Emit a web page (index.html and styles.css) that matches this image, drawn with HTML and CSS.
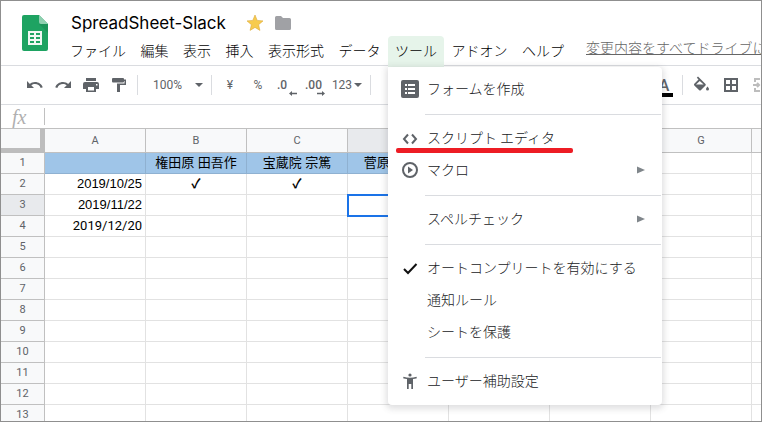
FILE: index.html
```html
<!DOCTYPE html>
<html lang="ja">
<head>
    <meta charset="UTF-8">
    <meta name="viewport" content="width=device-width, initial-scale=1.0">
    <title>SpreadSheet-Slack</title>
    <link rel="stylesheet" href="styles.css">
</head>
<body>
    <div class="app">
        <header class="header">
            <svg class="logo" viewBox="0 0 26 36">
                <path d="M2 0h15l9 9v25a2 2 0 0 1-2 2H2a2 2 0 0 1-2-2V2a2 2 0 0 1 2-2z" fill="#1ea362"/>
                <path d="M17 9h9v9z" fill="#17864f" opacity=".5"/>
                <path d="M17 0l9 9h-7a2 2 0 0 1-2-2z" fill="#8fd0b0"/>
                <path d="M6 16h14v14H6zM8 18v2h4v-2zm6 0v2h4v-2zm-6 4v2h4v-2zm6 0v2h4v-2zm-6 4v2h4v-2zm6 0v2h4v-2z" fill="#f1f8f4" fill-rule="evenodd"/>
            </svg>
            <div class="header-main">
                <div class="title-row">
                    <input class="doc-title" type="text" value="SpreadSheet-Slack" aria-label="名前を変更">
                    <button class="title-btn" aria-label="スター">
                        <svg width="18" height="18" viewBox="0 0 18 18"><path d="M9 1l2.200 5.400 5.800.5-4.400 3.800 1.300 5.700L9 13.400l-4.900 3 1.300-5.700L1 6.900l5.800-.5z" fill="#f7cb4d" stroke="#dba93a" stroke-width=".6"/></svg>
                    </button>
                    <button class="title-btn" aria-label="移動">
                        <svg width="18" height="18" viewBox="0 0 18 18"><path d="M1 3.500A1.500 1.500 0 0 1 2.500 2H7l2 2h6.500A1.500 1.500 0 0 1 17 5.500v9a1.500 1.500 0 0 1-1.500 1.500h-13A1.500 1.500 0 0 1 1 14.500z" fill="#a0a1a5"/></svg>
                    </button>
                </div>
                <div class="menu-row">
                    <nav class="menubar">
                        <button class="menu-btn">ファイル</button>
                        <button class="menu-btn">編集</button>
                        <button class="menu-btn">表示</button>
                        <button class="menu-btn">挿入</button>
                        <button class="menu-btn">表示形式</button>
                        <button class="menu-btn">データ</button>
                        <div class="menu-open">
                            <button class="menu-btn active" aria-expanded="true">ツール</button>
                            <div class="dropdown" role="menu">
                                <button class="item" role="menuitem">
                                    <svg class="item-icon" viewBox="0 0 18 18"><rect width="18" height="18" rx="2" fill="#5f6368"/><path d="M4 4h2v2H4zM7 4h7v2H7zM4 8h2v2H4zM7 8h7v2H7zM4 12h2v2H4zM7 12h7v2H7z" fill="#fff"/></svg>
                                    <span class="item-label">フォームを作成</span>
                                </button>
                                <hr>
                                <button class="item marked" role="menuitem">
                                    <svg class="item-icon" viewBox="0 0 18 18"><path d="M7 5.500L3 10l4 4.500M11 5.500l4 4.500-4 4.500" fill="none" stroke="#5f6368" stroke-width="2"/></svg>
                                    <span class="item-label">スクリプト エディタ</span>
                                </button>
                                <button class="item" role="menuitem">
                                    <svg class="item-icon" viewBox="0 0 18 18"><circle cx="9" cy="9" r="7" fill="none" stroke="#5f6368" stroke-width="2"/><path d="M7 5.500v7L12 9z" fill="#5f6368"/></svg>
                                    <span class="item-label">マクロ</span>
                                    <svg class="submenu" viewBox="0 0 8 8"><path d="M0 0.500v7L8 4z"/></svg>
                                </button>
                                <hr>
                                <button class="item" role="menuitem">
                                    <span class="item-icon"></span>
                                    <span class="item-label">スペルチェック</span>
                                    <svg class="submenu" viewBox="0 0 8 8"><path d="M0 0.500v7L8 4z"/></svg>
                                </button>
                                <hr>
                                <button class="item" role="menuitemcheckbox" aria-checked="true">
                                    <svg class="item-icon" viewBox="0 0 18 18"><path d="M3 10l4 4 8.500-9" fill="none" stroke="#111" stroke-width="2"/></svg>
                                    <span class="item-label">オートコンプリートを有効にする</span>
                                </button>
                                <button class="item" role="menuitem">
                                    <span class="item-icon"></span>
                                    <span class="item-label">通知ルール</span>
                                </button>
                                <button class="item" role="menuitem">
                                    <span class="item-icon"></span>
                                    <span class="item-label">シートを保護</span>
                                </button>
                                <hr>
                                <button class="item" role="menuitem">
                                    <svg class="item-icon" viewBox="0 0 18 18"><circle cx="9" cy="3" r="1.600" fill="#5f6368"/><path d="M2.500 4.700C6.500 6 11.500 6 15.500 4.700l.4 1.500c-1.300.4-2.600.7-3.900.8V17h-1.700v-5H7.700v5H6V7c-1.300-.1-2.600-.4-3.900-.8z" fill="#5f6368"/></svg>
                                    <span class="item-label">ユーザー補助設定</span>
                                </button>
                            </div>
                        </div>
                        <button class="menu-btn">アドオン</button>
                        <button class="menu-btn">ヘルプ</button>
                    </nav>
                    <a class="save-state" href="#">変更内容をすべてドライブに</a>
                </div>
            </div>
        </header>

        <div class="toolbar">
            <button class="tool" aria-label="元に戻す">
                <svg width="18" height="18" viewBox="0 0 18 18"><path d="M1 5v7h7L5.300 9.300C6.400 8.400 7.600 8 9 8c2.700 0 4.800 1.600 5.700 4l2.100-.7C15.700 8.100 12.600 6 9 6 7 6 5.300 6.700 3.900 7.900z" fill="#5f6368"/></svg>
            </button>
            <button class="tool" aria-label="やり直し">
                <svg width="18" height="18" viewBox="0 0 18 18"><path d="M17 5v7h-7l2.700-2.700C11.600 8.400 10.400 8 9 8c-2.700 0-4.800 1.600-5.700 4l-2.100-.7C2.300 8.100 5.400 6 9 6c2 0 3.700.7 5.100 1.900z" fill="#5f6368"/></svg>
            </button>
            <button class="tool" aria-label="印刷">
                <svg width="18" height="18" viewBox="0 0 18 18"><path d="M4 2h10v3H4zM3 6h12a2 2 0 0 1 2 2v5h-3v3H4v-3H1V8a2 2 0 0 1 2-2zm3 5v3.500h6V11zm8-3v1.500h1.500V8z" fill="#5f6368" fill-rule="evenodd"/></svg>
            </button>
            <button class="tool" aria-label="書式を貼り付け">
                <svg width="18" height="18" viewBox="0 0 18 18"><path d="M3 2h10a1 1 0 0 1 1 1v.5h2V9h-6v7H7V7.500h7.500V5H14v.5a1 1 0 0 1-1 1H3a1 1 0 0 1-1-1V3a1 1 0 0 1 1-1z" fill="#5f6368"/></svg>
            </button>
            <span class="divider"></span>
            <label class="zoom">
                <select aria-label="ズーム"><option>100%</option></select>
                <span class="caret"></span>
            </label>
            <span class="divider"></span>
            <button class="tool">¥</button>
            <button class="tool">%</button>
            <button class="tool decimal">
                .0
                <svg width="8" height="5" viewBox="0 0 8 5"><path d="M0 2.500L3 0v1.700h5v1.600H3V5z" fill="#5f6368"/></svg>
            </button>
            <button class="tool decimal">
                .00
                <svg width="8" height="5" viewBox="0 0 8 5"><path d="M8 2.500L5 0v1.700H0v1.600h5V5z" fill="#5f6368"/></svg>
            </button>
            <button class="tool format">123<span class="caret"></span></button>
            <span class="divider"></span>
            <span class="toolbar-gap"></span>
            <button class="tool text-color">A</button>
            <span class="divider"></span>
            <button class="tool" aria-label="塗りつぶしの色">
                <svg width="18" height="18" viewBox="0 0 18 18"><path d="M6 0.500L13.500 8a1.200 1.200 0 0 1 0 1.500L9 14a1.400 1.400 0 0 1-2 0L2.300 9.400a1.200 1.200 0 0 1 0-1.600L6.500 3.500 4.800 1.700zM7.800 4.900L4 8.500h7.600zM15.500 10.500s1.500 1.700 1.500 2.600a1.500 1.500 0 0 1-3 0c0-.9 1.500-2.600 1.500-2.600z" fill="#5f6368" fill-rule="evenodd"/></svg>
            </button>
            <button class="tool wide" aria-label="枠線">
                <svg width="18" height="18" viewBox="0 0 18 18"><path d="M3 3h12v12H3zM9 3v12M3 9h12" fill="none" stroke="#5f6368" stroke-width="2"/></svg>
            </button>
            <button class="tool" aria-label="セルを結合">
                <svg width="18" height="18" viewBox="0 0 18 18"><path d="M8 3H3v3M3 12v3h5M10 3h5v3M15 12v3h-5M1 9h6M11 9h6M5 7l2 2-2 2M13 7l-2 2 2 2" fill="none" stroke="#bdbdbd" stroke-width="2"/></svg>
            </button>
        </div>

        <div class="formula-bar">
            <label class="fx" for="formula">fx</label>
            <input id="formula" class="formula" type="text">
        </div>

        <div class="grid-wrap">
            <table class="grid">
                <colgroup>
                    <col class="col-num">
                    <col><col><col><col><col><col><col><col>
                </colgroup>
                <thead>
                    <tr><th class="corner"></th><th>A</th><th>B</th><th>C</th><th class="current"></th><th></th><th></th><th>G</th><th></th></tr>
                </thead>
                <tbody>
                    <tr class="names"><th>1</th><td></td><td>権田原 田吾作</td><td>宝蔵院 宗篤</td><td>菅原 右大臣</td><td class="plain"></td><td class="plain"></td><td class="plain"></td><td class="plain"></td></tr>
                    <tr><th>2</th><td class="date">2019/10/25</td><td class="check">✓</td><td class="check">✓</td><td></td><td></td><td></td><td></td><td></td></tr>
                    <tr><th class="current">3</th><td class="date">2019/11/22</td><td></td><td></td><td class="selected"></td><td></td><td></td><td></td><td></td></tr>
                    <tr><th>4</th><td class="date roboto">2019/12/20</td><td></td><td></td><td></td><td></td><td></td><td></td><td></td></tr>
                    <tr><th>5</th><td></td><td></td><td></td><td></td><td></td><td></td><td></td><td></td></tr>
                    <tr><th>6</th><td></td><td></td><td></td><td></td><td></td><td></td><td></td><td></td></tr>
                    <tr><th>7</th><td></td><td></td><td></td><td></td><td></td><td></td><td></td><td></td></tr>
                    <tr><th>8</th><td></td><td></td><td></td><td></td><td></td><td></td><td></td><td></td></tr>
                    <tr><th>9</th><td></td><td></td><td></td><td></td><td></td><td></td><td></td><td></td></tr>
                    <tr><th>10</th><td></td><td></td><td></td><td></td><td></td><td></td><td></td><td></td></tr>
                    <tr><th>11</th><td></td><td></td><td></td><td></td><td></td><td></td><td></td><td></td></tr>
                    <tr><th>12</th><td></td><td></td><td></td><td></td><td></td><td></td><td></td><td></td></tr>
                    <tr><th>13</th><td></td><td></td><td></td><td></td><td></td><td></td><td></td><td></td></tr>
                </tbody>
            </table>
        </div>
    </div>
</body>
</html>
```
FILE: styles.css
```css
* {
    box-sizing: border-box;
}
body {
    margin: 0;
    font-family: Roboto, "Noto Sans CJK JP", sans-serif;
    color: #202124;
    background: #fff;
}
button, input, select {
    font: inherit;
    color: inherit;
    background: none;
    border: none;
    padding: 0;
    margin: 0;
    outline: none;
}
.app {
    display: flex;
    flex-direction: column;
    height: 100vh;
    border: 1px solid #8f8f8f;
    overflow: hidden;
}

/* header */
.header {
    display: flex;
    flex: none;
    height: 65px;
    padding-left: 21px;
    border-bottom: 1px solid #dadce0;
}
.logo {
    flex: none;
    width: 26px;
    height: 36px;
    margin: 14px 15px 0 0;
}
.header-main {
    flex: 1;
    min-width: 0;
}
.title-row {
    display: flex;
    align-items: center;
    height: 35px;
    padding: 8px 0 0 8px;
}
.doc-title {
    width: 175px;
    font-family: Inter, sans-serif;
    font-size: 17px;
    line-height: 24px;
    color: #000;
}
.title-btn {
    display: flex;
    width: 28px;
}
.menu-row {
    display: flex;
    white-space: nowrap;
}
.menubar {
    display: flex;
    flex: none;
    justify-content: space-between;
    width: 508px;
}
.menu-btn {
    padding: 0 7px 4px;
    height: 31px;
    font-family: "Noto Sans CJK JP", sans-serif;
    font-size: 14px;
    font-weight: 300;
    line-height: 26px;
    color: #000;
}
.menu-btn.active {
    background: #e6f4ea;
    border-radius: 4px 4px 0 0;
}
.menu-open {
    position: relative;
}
.save-state {
    margin-left: 15px;
    font-family: "Noto Sans CJK JP", sans-serif;
    font-size: 14px;
    font-weight: 300;
    line-height: 22px;
    color: #666;
}

/* tools menu */
.dropdown {
    position: absolute;
    z-index: 10;
    top: 100%;
    left: 0;
    width: 274px;
    padding: 6px 0 8px;
    background: #fff;
    border-radius: 0 4px 4px 4px;
    box-shadow: 0 2px 6px 2px rgba(60, 64, 67, 0.16);
}
.dropdown hr {
    margin: 9px 1px 7px 37px;
    border: none;
    border-top: 1px solid #dadce0;
}
.item {
    position: relative;
    display: flex;
    align-items: center;
    gap: 8px;
    width: 100%;
    height: 32px;
    padding: 0 17px 0 13px;
    font-family: "Noto Sans CJK JP", sans-serif;
    font-size: 14px;
    font-weight: 300;
    text-align: left;
}
.item-icon {
    flex: none;
    width: 18px;
    height: 18px;
}
.item-label {
    padding-bottom: 2px;
}
.submenu {
    width: 8px;
    height: 8px;
    margin-left: auto;
    fill: #80868b;
}
.item.marked::after {
    content: "";
    position: absolute;
    left: 8px;
    bottom: 1px;
    width: 177px;
    height: 5px;
    background: #ed1c24;
    border-radius: 2px;
}

/* toolbar */
.toolbar {
    display: flex;
    flex: none;
    align-items: center;
    height: 39px;
    padding-left: 20px;
    border-bottom: 1px solid #dadce0;
    color: #5f6368;
    font-size: 12px;
}
.tool {
    position: relative;
    display: flex;
    flex: none;
    align-items: center;
    justify-content: center;
    width: 28px;
    height: 28px;
}
.tool.wide {
    width: 32px;
}
.divider {
    flex: none;
    width: 1px;
    height: 20px;
    margin: 0 4px;
    background: #dadce0;
}
.caret {
    border: 4px solid transparent;
    border-top-color: #5f6368;
    border-bottom: none;
}
.zoom {
    display: flex;
    flex: none;
    align-items: center;
    justify-content: space-between;
    width: 65px;
    padding: 0 4px 0 11px;
}
.zoom select {
    width: 36px;
    appearance: none;
}
.tool.decimal {
    justify-content: flex-start;
    padding-left: 5px;
    font-weight: 500;
}
.tool.decimal svg {
    position: absolute;
    right: 3px;
    bottom: 3px;
}
.tool.format {
    gap: 2px;
    width: 38px;
}
.toolbar-gap {
    flex: none;
    width: 275px;
}
.text-color {
    font-size: 16px;
    font-weight: 500;
}
.text-color::after {
    content: "";
    position: absolute;
    left: 5px;
    bottom: 2px;
    width: 18px;
    height: 4px;
    background: #000;
}

/* formula bar */
.formula-bar {
    display: flex;
    flex: none;
    align-items: center;
    height: 23px;
}
.fx {
    width: 43px;
    padding-left: 11px;
    font-family: "Liberation Serif", serif;
    font-size: 20px;
    font-style: italic;
    line-height: 20px;
    color: #b0b0b0;
}
.formula {
    flex: 1;
    height: 17px;
    border-left: 1px solid #c0c0c0;
}

/* sheet */
.grid-wrap {
    flex: 1;
    min-height: 0;
    overflow: hidden;
    border-top: 1px solid #c0c0c0;
}
.grid {
    width: 852px;
    table-layout: fixed;
    border-collapse: separate;
    border-spacing: 0;
}
.grid col {
    width: 101px;
}
.grid .col-num {
    width: 44px;
}
.grid th {
    height: 21px;
    padding: 0;
    background: #f8f9fa;
    border-right: 1px solid #c0c0c0;
    border-bottom: 1px solid #c0c0c0;
    font-size: 11px;
    font-weight: 400;
    line-height: 16px;
    color: #5f6368;
}
.grid thead th {
    height: 24px;
}
.grid th.current {
    background: #e8eaed;
}
.grid th.corner {
    border-right: 5px solid #bdbdbd;
    border-bottom: 5px solid #bdbdbd;
}
.grid td {
    height: 21px;
    padding: 0 3px;
    border-right: 1px solid #e2e2e2;
    border-bottom: 1px solid #e2e2e2;
    font-family: "Liberation Sans", "Noto Sans CJK JP", sans-serif;
    font-size: 13px;
    line-height: 16px;
    text-align: center;
    white-space: nowrap;
    color: #000;
}
.grid .names td {
    background: #9fc5e8;
    border-color: #8fb1d1;
}
.grid .names td.plain {
    background: #fff;
    border-color: #e2e2e2;
}
.grid td.date {
    text-align: right;
}
.grid td.roboto {
    font-family: Roboto, sans-serif;
}
.grid td.check {
    font-weight: 700;
}
.grid td.selected {
    outline: 2px solid #1a73e8;
    outline-offset: -1px;
}
```
